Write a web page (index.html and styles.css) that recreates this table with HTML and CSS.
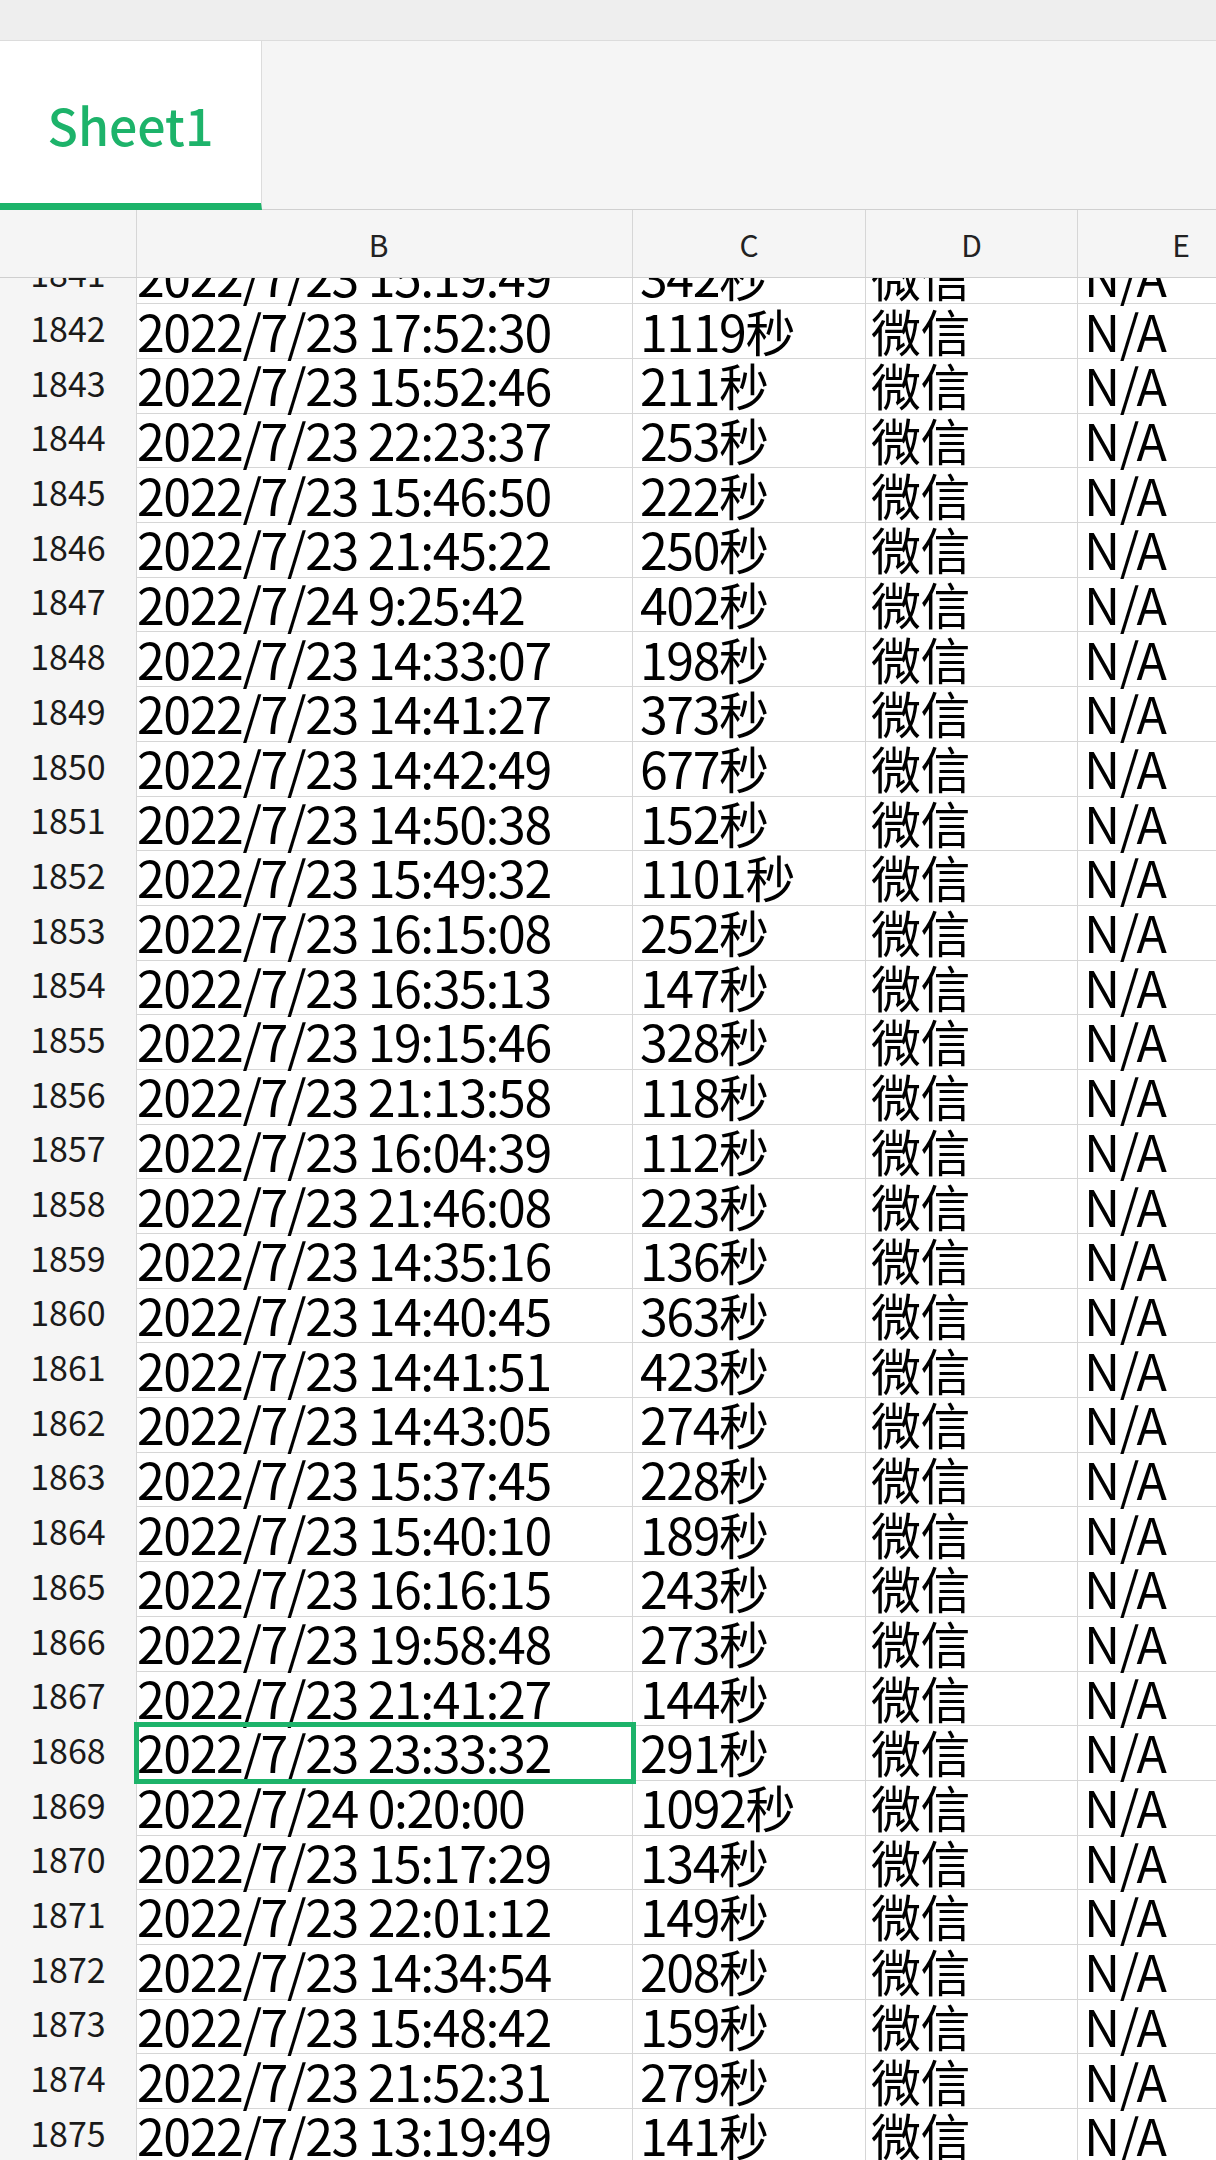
FILE: index.html
```html
<!DOCTYPE html>
<html lang="zh">
<head>
<meta charset="utf-8">
<link rel="stylesheet" href="styles.css">
</head>
<body>
<div class="app">
  <div class="topbar"></div>
  <div class="tabbar">
    <div class="tab">Sheet1</div>
    <div class="tabrest"></div>
  </div>
  <div class="header">
    <div class="hcell corner"></div>
    <div class="hcell hb">B</div>
    <div class="hcell">C</div>
    <div class="hcell">D</div>
    <div class="hcell he">E</div>
  </div>
  <div class="viewport">
    <div class="rows">
      <div class="row"><div class="num">1841</div><div class="cell b">2022/7/23 15:19:49</div><div class="cell c">342秒</div><div class="cell d">微信</div><div class="cell e">N/A</div></div>
      <div class="row"><div class="num">1842</div><div class="cell b">2022/7/23 17:52:30</div><div class="cell c">1119秒</div><div class="cell d">微信</div><div class="cell e">N/A</div></div>
      <div class="row"><div class="num">1843</div><div class="cell b">2022/7/23 15:52:46</div><div class="cell c">211秒</div><div class="cell d">微信</div><div class="cell e">N/A</div></div>
      <div class="row"><div class="num">1844</div><div class="cell b">2022/7/23 22:23:37</div><div class="cell c">253秒</div><div class="cell d">微信</div><div class="cell e">N/A</div></div>
      <div class="row"><div class="num">1845</div><div class="cell b">2022/7/23 15:46:50</div><div class="cell c">222秒</div><div class="cell d">微信</div><div class="cell e">N/A</div></div>
      <div class="row"><div class="num">1846</div><div class="cell b">2022/7/23 21:45:22</div><div class="cell c">250秒</div><div class="cell d">微信</div><div class="cell e">N/A</div></div>
      <div class="row"><div class="num">1847</div><div class="cell b">2022/7/24 9:25:42</div><div class="cell c">402秒</div><div class="cell d">微信</div><div class="cell e">N/A</div></div>
      <div class="row"><div class="num">1848</div><div class="cell b">2022/7/23 14:33:07</div><div class="cell c">198秒</div><div class="cell d">微信</div><div class="cell e">N/A</div></div>
      <div class="row"><div class="num">1849</div><div class="cell b">2022/7/23 14:41:27</div><div class="cell c">373秒</div><div class="cell d">微信</div><div class="cell e">N/A</div></div>
      <div class="row"><div class="num">1850</div><div class="cell b">2022/7/23 14:42:49</div><div class="cell c">677秒</div><div class="cell d">微信</div><div class="cell e">N/A</div></div>
      <div class="row"><div class="num">1851</div><div class="cell b">2022/7/23 14:50:38</div><div class="cell c">152秒</div><div class="cell d">微信</div><div class="cell e">N/A</div></div>
      <div class="row"><div class="num">1852</div><div class="cell b">2022/7/23 15:49:32</div><div class="cell c">1101秒</div><div class="cell d">微信</div><div class="cell e">N/A</div></div>
      <div class="row"><div class="num">1853</div><div class="cell b">2022/7/23 16:15:08</div><div class="cell c">252秒</div><div class="cell d">微信</div><div class="cell e">N/A</div></div>
      <div class="row"><div class="num">1854</div><div class="cell b">2022/7/23 16:35:13</div><div class="cell c">147秒</div><div class="cell d">微信</div><div class="cell e">N/A</div></div>
      <div class="row"><div class="num">1855</div><div class="cell b">2022/7/23 19:15:46</div><div class="cell c">328秒</div><div class="cell d">微信</div><div class="cell e">N/A</div></div>
      <div class="row"><div class="num">1856</div><div class="cell b">2022/7/23 21:13:58</div><div class="cell c">118秒</div><div class="cell d">微信</div><div class="cell e">N/A</div></div>
      <div class="row"><div class="num">1857</div><div class="cell b">2022/7/23 16:04:39</div><div class="cell c">112秒</div><div class="cell d">微信</div><div class="cell e">N/A</div></div>
      <div class="row"><div class="num">1858</div><div class="cell b">2022/7/23 21:46:08</div><div class="cell c">223秒</div><div class="cell d">微信</div><div class="cell e">N/A</div></div>
      <div class="row"><div class="num">1859</div><div class="cell b">2022/7/23 14:35:16</div><div class="cell c">136秒</div><div class="cell d">微信</div><div class="cell e">N/A</div></div>
      <div class="row"><div class="num">1860</div><div class="cell b">2022/7/23 14:40:45</div><div class="cell c">363秒</div><div class="cell d">微信</div><div class="cell e">N/A</div></div>
      <div class="row"><div class="num">1861</div><div class="cell b">2022/7/23 14:41:51</div><div class="cell c">423秒</div><div class="cell d">微信</div><div class="cell e">N/A</div></div>
      <div class="row"><div class="num">1862</div><div class="cell b">2022/7/23 14:43:05</div><div class="cell c">274秒</div><div class="cell d">微信</div><div class="cell e">N/A</div></div>
      <div class="row"><div class="num">1863</div><div class="cell b">2022/7/23 15:37:45</div><div class="cell c">228秒</div><div class="cell d">微信</div><div class="cell e">N/A</div></div>
      <div class="row"><div class="num">1864</div><div class="cell b">2022/7/23 15:40:10</div><div class="cell c">189秒</div><div class="cell d">微信</div><div class="cell e">N/A</div></div>
      <div class="row"><div class="num">1865</div><div class="cell b">2022/7/23 16:16:15</div><div class="cell c">243秒</div><div class="cell d">微信</div><div class="cell e">N/A</div></div>
      <div class="row"><div class="num">1866</div><div class="cell b">2022/7/23 19:58:48</div><div class="cell c">273秒</div><div class="cell d">微信</div><div class="cell e">N/A</div></div>
      <div class="row"><div class="num">1867</div><div class="cell b">2022/7/23 21:41:27</div><div class="cell c">144秒</div><div class="cell d">微信</div><div class="cell e">N/A</div></div>
      <div class="row"><div class="num">1868</div><div class="cell b selected">2022/7/23 23:33:32</div><div class="cell c">291秒</div><div class="cell d">微信</div><div class="cell e">N/A</div></div>
      <div class="row"><div class="num">1869</div><div class="cell b">2022/7/24 0:20:00</div><div class="cell c">1092秒</div><div class="cell d">微信</div><div class="cell e">N/A</div></div>
      <div class="row"><div class="num">1870</div><div class="cell b">2022/7/23 15:17:29</div><div class="cell c">134秒</div><div class="cell d">微信</div><div class="cell e">N/A</div></div>
      <div class="row"><div class="num">1871</div><div class="cell b">2022/7/23 22:01:12</div><div class="cell c">149秒</div><div class="cell d">微信</div><div class="cell e">N/A</div></div>
      <div class="row"><div class="num">1872</div><div class="cell b">2022/7/23 14:34:54</div><div class="cell c">208秒</div><div class="cell d">微信</div><div class="cell e">N/A</div></div>
      <div class="row"><div class="num">1873</div><div class="cell b">2022/7/23 15:48:42</div><div class="cell c">159秒</div><div class="cell d">微信</div><div class="cell e">N/A</div></div>
      <div class="row"><div class="num">1874</div><div class="cell b">2022/7/23 21:52:31</div><div class="cell c">279秒</div><div class="cell d">微信</div><div class="cell e">N/A</div></div>
      <div class="row"><div class="num">1875</div><div class="cell b">2022/7/23 13:19:49</div><div class="cell c">141秒</div><div class="cell d">微信</div><div class="cell e">N/A</div></div>
    </div>
  </div>
</div>
</body>
</html>
```

FILE: styles.css
```css
* { box-sizing: border-box; }
html, body { margin: 0; padding: 0; }
body {
  width: 1216px;
  height: 2160px;
  overflow: hidden;
  background: #ffffff;
  font-family: "Noto Sans CJK SC", "Noto Sans", sans-serif;
  color: #000;
}
.app { display: flex; flex-direction: column; height: 2160px; }
.topbar { height: 40px; background: #eeeeee; flex: none; }
.tabbar {
  height: 170px;
  flex: none;
  display: flex;
  border-top: 1px solid #dcdcdc;
}
.tab {
  width: 262px;
  background: #ffffff;
  border-right: 1px solid #dcdcdc;
  border-bottom: 7px solid #1db36a;
  display: flex;
  align-items: center;
  justify-content: center;
  color: #1db36a;
  font-size: 50px;
  font-weight: 500;
  padding-top: 4px;
}
.tabrest {
  flex: 1;
  background: #f5f5f5;
  border-bottom: 1px solid #d0d0d0;
}
.header {
  flex: none;
  height: 68px;
  display: grid;
  grid-template-columns: 137px 496px 233px 212px 1fr;
  background: #f5f5f5;
  border-bottom: 1px solid #cfcfcf;
  position: relative;
  z-index: 2;
}
.hcell {
  border-right: 1px solid #d6d6d6;
  display: flex;
  align-items: center;
  justify-content: center;
  font-size: 30px;
  color: #222;
}
.hcell.hb { padding-right: 12px; }
.hcell.he { border-right: none; padding-left: 68px; }
.viewport { flex: 1; overflow: hidden; }
.rows { margin-top: -29.7px; }
.row {
  display: grid;
  grid-template-columns: 137px 496px 233px 212px 1fr;
  height: 54.6875px;
}
.num {
  background: #f5f5f5;
  border-right: 1px solid #d6d6d6;
  border-bottom: 1px solid #d6d6d6;
  display: flex;
  align-items: center;
  justify-content: center;
  font-size: 34px;
  color: #1a1a1a;
  padding-bottom: 6px;
}
.cell {
  border-right: 1px solid #d6d6d6;
  border-bottom: 1px solid #d6d6d6;
  display: flex;
  align-items: center;
  font-size: 50px;
  letter-spacing: -1.4px;
  color: #000;
  white-space: nowrap;
  overflow: visible;
  line-height: 1;
  padding-bottom: 2px;
}
.cell.b { padding-left: 0; }
.cell.c { padding-left: 7px; }
.cell.d { padding-left: 5px; letter-spacing: -0.5px; }
.cell.e { padding-left: 6px; border-right: none; letter-spacing: -0.5px; }
.cell.selected {
  outline: 5px solid #1db36a;
  outline-offset: -2px;
  position: relative;
  z-index: 1;
}
```
